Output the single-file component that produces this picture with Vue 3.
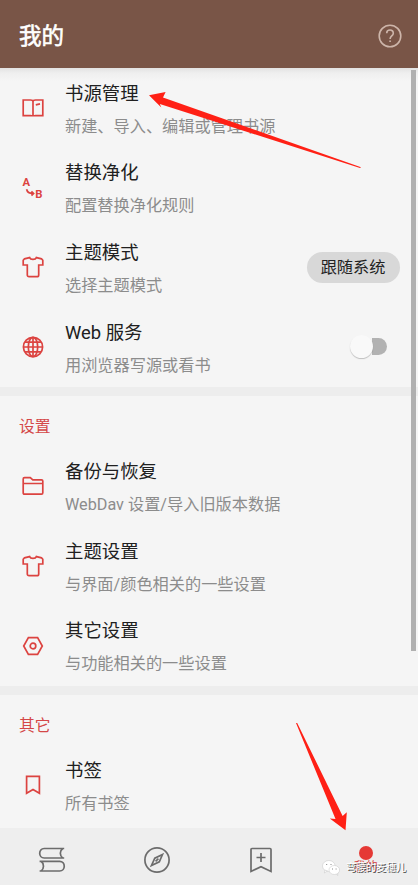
<script setup>
const groups = [
  {
    title: '',
    items: [
      { icon: 'book', name: '书源管理', note: '新建、导入、编辑或管理书源' },
      { icon: 'replace', name: '替换净化', note: '配置替换净化规则' },
      { icon: 'shirt', name: '主题模式', note: '选择主题模式', value: '跟随系统' },
      { icon: 'globe', name: 'Web 服务', note: '用浏览器写源或看书', toggle: true },
    ],
  },
  {
    title: '设置',
    items: [
      { icon: 'folder', name: '备份与恢复', note: 'WebDav 设置/导入旧版本数据' },
      { icon: 'shirt', name: '主题设置', note: '与界面/颜色相关的一些设置' },
      { icon: 'hexagon', name: '其它设置', note: '与功能相关的一些设置' },
    ],
  },
  {
    title: '其它',
    items: [{ icon: 'bookmark', name: '书签', note: '所有书签' }],
  },
]
</script>

<template>
  <div class="screen">
    <header class="bar">
      <h1>我的</h1>
      <svg class="help" viewBox="0 0 24 24">
        <circle cx="12" cy="12" r="10.8" />
        <path d="M8.7 9.2c0-4.3 6.6-4.3 6.6 0 0 2.6-3.2 2.9-3.2 5.7M12.1 16.6v1.5" />
      </svg>
    </header>

    <main class="content">
      <section v-for="(group, g) in groups" :key="g" class="group">
        <h2 v-if="group.title">{{ group.title }}</h2>
        <div v-for="item in group.items" :key="item.name" class="item">
          <svg class="icon" viewBox="0 0 22 22">
            <g v-if="item.icon === 'book'">
              <path d="M1.2 3H8.5Q11 3 11 4.4Q11 3 13.5 3H20.8V18.6H13.5Q11 18.6 11 19.4Q11 18.6 8.5 18.6H1.2ZM11 4.4V19M13.8 7.8L18 6.8" />
            </g>
            <g v-else-if="item.icon === 'replace'">
              <text x="0.5" y="9">A</text>
              <text x="13.2" y="20.6">B</text>
              <path d="M4.6 12.2C5.2 15 7 16.4 10.8 16.5M9.4 14.3L11.6 16.5L9.4 18.5" />
            </g>
            <g v-else-if="item.icon === 'shirt'">
              <path d="M7.6 1.6C8.5 3.9 13.5 3.9 14.4 1.6L19.5 2.8L20.8 4.3V9H16.7V18.9Q16.7 20.7 14.9 20.7H7.1Q5.3 20.7 5.3 18.9V9H1.2V4.3L2.5 2.8Z" />
            </g>
            <g v-else-if="item.icon === 'globe'">
              <circle cx="11" cy="11" r="9.6" />
              <ellipse cx="11" cy="11" rx="4.7" ry="9.6" />
              <path d="M11 1.4V20.6M1.4 11H20.6M3.1 6.2H18.9M3.1 15.8H18.9" />
            </g>
            <g v-else-if="item.icon === 'folder'">
              <path d="M2.5 2.6H8.3L10.8 4.8H19.5Q20.8 4.8 20.8 6V17.8Q20.8 19.2 19.5 19.2H2.5Q1.2 19.2 1.2 17.8V4Q1.2 2.6 2.5 2.6ZM1.2 8.5H20.8" />
            </g>
            <g v-else-if="item.icon === 'hexagon'">
              <path d="M6.4 2.6H15.6L20.3 11L15.6 19.4H6.4L1.7 11Z" />
              <circle cx="11" cy="11" r="2.8" />
            </g>
            <g v-else>
              <path d="M4.6 2.4H17.4V19.3L11 15.4L4.6 19.3Z" />
            </g>
          </svg>
          <div class="text">
            <div class="name">{{ item.name }}</div>
            <div class="note">{{ item.note }}</div>
          </div>
          <span v-if="item.value" class="pill">{{ item.value }}</span>
          <span v-if="item.toggle" class="switch"><i></i></span>
        </div>
      </section>
      <div class="scrollbar"></div>
    </main>

    <nav class="tabs">
      <div class="tab">
        <svg viewBox="0 0 28 28">
          <path d="M26.2 2.5H6.2C.2 2.5.2 12 6.2 12H26.2M24.8 2.5C21.5 4.8 21.5 9.7 24.8 12M1.6 15.3H21.6C27.8 15.3 27.8 25 21.6 25H1.6M3 15.3C6.3 17.6 6.3 22.7 3 25" />
        </svg>
      </div>
      <div class="tab">
        <svg viewBox="0 0 28 28">
          <circle cx="14" cy="14" r="12.1" />
          <path d="M19.5 8.5L16.3 15.8L8.5 19.5L11.8 12.2ZM12.6 15.4L15.4 12.6" />
        </svg>
      </div>
      <div class="tab">
        <svg viewBox="0 0 28 28">
          <path d="M5 2.5H23Q24 2.5 24 3.5V25.4L14 20.7L4 25.4V3.5Q4 2.5 5 2.5ZM14 7V16M9.5 11.5H18.5" />
        </svg>
      </div>
      <div class="tab active">
        <i class="dot"></i>
        <span>我的</span>
      </div>
    </nav>

    <svg class="arrows" viewBox="0 0 418 886">
      <path d="M149 95.2L165.6 92L163 97.5L361 167.2L360 168L159.8 104L161.3 107.5Z" />
      <path d="M296 723L297.2 723L342.6 816L346.8 812.2L345.5 830.3L329.8 818.6L335.5 819Z" />
    </svg>

    <div class="signature">
      <svg viewBox="0 0 18 16">
        <ellipse cx="6.8" cy="6" rx="6.3" ry="5.5" />
        <path d="M3 10L2.3 13L5.5 11ZM14 13L15.6 15.5L16 12Z" />
        <ellipse cx="12.3" cy="10" rx="5.3" ry="4.5" />
        <path class="eyes" d="M4.2 4.5h1M8.5 4.5h1M10 9h1M13.6 9h1" />
      </svg>
      <span>弯腰的麦穗儿</span>
    </div>
  </div>
</template>

<style>
body {
  background: #fff;
}
</style>

<style scoped>
.screen {
  position: relative;
  display: flex;
  flex-direction: column;
  width: 418px;
  height: 886px;
  overflow: hidden;
  box-sizing: border-box;
  padding-bottom: 1px;
  font-family: Roboto, "Noto Sans CJK SC", sans-serif;
}
.bar {
  flex: none;
  display: flex;
  align-items: center;
  justify-content: space-between;
  height: 68px;
  box-sizing: border-box;
  padding: 4px 16px 0 19px;
  background: #795547;
}
h1 {
  margin: 0;
  font-size: 22.5px;
  line-height: 32px;
  font-weight: 400;
  color: #fff;
  -webkit-text-stroke: 0.6px #fff;
}
.help {
  width: 24px;
  height: 24px;
  fill: none;
  stroke: #cdb5aa;
  stroke-width: 1.6;
}
.content {
  position: relative;
  flex: 1;
  min-height: 0;
  overflow: hidden;
  background: linear-gradient(#e2e2e2, #efefef 5px, #f5f5f5 13px);
}
.group + .group {
  border-top: 9px solid #ededed;
}
h2 {
  margin: 0;
  height: 50.7px;
  line-height: 62px;
  padding-left: 19px;
  box-sizing: border-box;
  font-size: 15.8px;
  font-weight: 400;
  color: #d44747;
}
.item {
  display: flex;
  align-items: center;
  height: 79.7px;
  box-sizing: border-box;
  padding: 0 18.5px 0 21.5px;
}
.icon {
  flex: none;
  width: 22px;
  height: 22px;
  overflow: visible;
  fill: none;
  stroke: #dc4340;
  stroke-width: 1.7;
}
.icon text {
  font: 700 11.3px Roboto, sans-serif;
  fill: #dc4340;
  stroke: none;
}
.text {
  flex: 1;
  padding: 4.6px 0 0 21.5px;
}
.name {
  font-size: 18.4px;
  line-height: 32px;
  color: #202020;
}
.note {
  font-size: 16.2px;
  line-height: 33px;
  color: #8c8c8c;
}
.pill {
  width: 93px;
  height: 31px;
  line-height: 32px;
  border-radius: 16px;
  background: #d8d8d8;
  color: #222;
  font-size: 16.2px;
  text-align: center;
}
.switch {
  display: flex;
  align-items: center;
  width: 30px;
  height: 17px;
  margin-right: 13px;
  border-radius: 9px;
  background: linear-gradient(90deg, transparent 50%, #b2b2b2 50%);
}
.switch i {
  flex: none;
  width: 23px;
  height: 23px;
  margin-left: -7px;
  border-radius: 50%;
  background: #f9f9f9;
  box-shadow: 0 1px 1px rgba(0, 0, 0, 0.22);
}
.scrollbar {
  position: absolute;
  top: 2px;
  right: 2px;
  width: 5px;
  height: 581px;
  background: #b0b0b0;
}
.tabs {
  flex: none;
  display: flex;
  height: 57px;
  background: #eee;
}
.tab {
  flex: 1;
  display: flex;
  flex-direction: column;
  align-items: center;
  padding-top: 18px;
}
.tab svg {
  width: 28px;
  height: 28px;
  fill: none;
  stroke: #6c6c6c;
  stroke-width: 1.7;
}
.dot {
  width: 14px;
  height: 14px;
  border-radius: 50%;
  background: #e53935;
}
.tab span {
  font-size: 12px;
  line-height: 15px;
  color: #d53c3c;
}
.arrows {
  position: absolute;
  inset: 0;
  width: 418px;
  height: 886px;
  fill: #ff2015;
}
.signature {
  position: absolute;
  left: 322px;
  top: 857.5px;
  display: flex;
  align-items: center;
  height: 20px;
}
.signature svg {
  width: 18px;
  height: 16px;
  margin-right: 6px;
  fill: #fff;
  stroke: #c4c4c4;
  stroke-width: 0.5;
}
.signature .eyes {
  stroke: #888;
  stroke-width: 1;
}
.signature span {
  font-size: 10px;
  line-height: 20px;
  white-space: nowrap;
  color: #fff;
  text-shadow: 1px 1px 0 #444;
}
</style>
